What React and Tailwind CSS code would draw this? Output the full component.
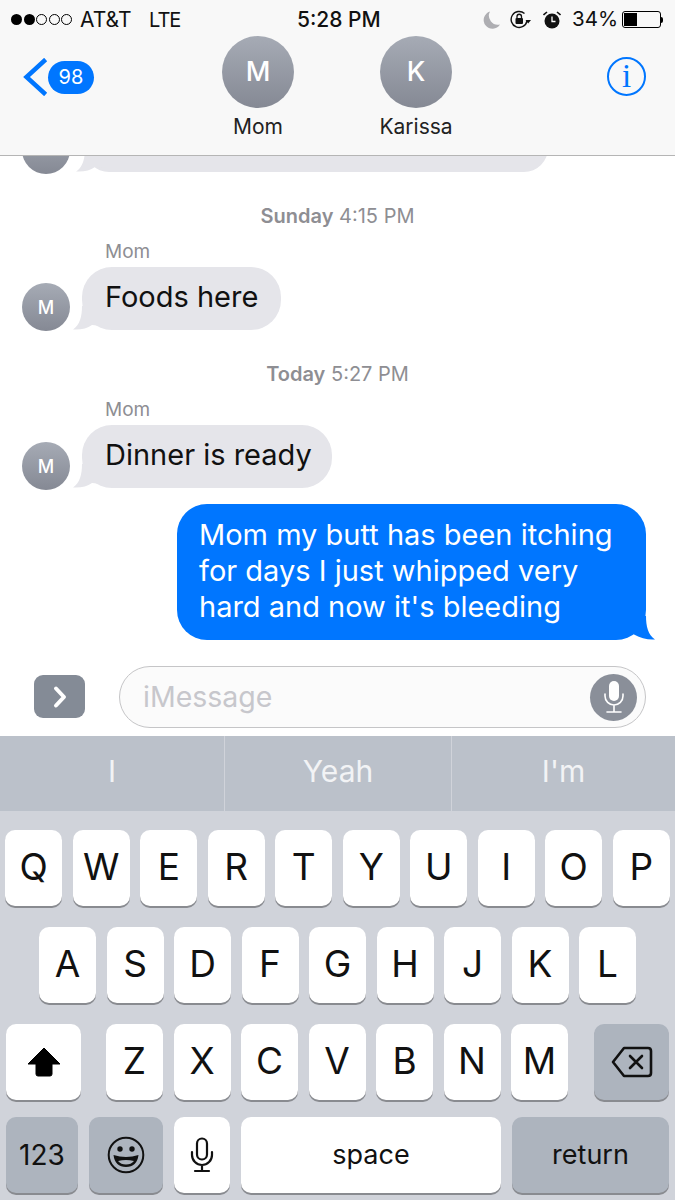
import React from 'react';

const rowOne = ['Q', 'W', 'E', 'R', 'T', 'Y', 'U', 'I', 'O', 'P'];
const rowTwo = ['A', 'S', 'D', 'F', 'G', 'H', 'J', 'K', 'L'];
const rowThree = ['Z', 'X', 'C', 'V', 'B', 'N', 'M'];

function Avatar({ letter }) {
  return (
    <div className="w-[48px] h-[48px] shrink-0 rounded-full bg-gradient-to-b from-[#a6abb5] to-[#858994] flex items-center justify-center text-white text-[18px] font-medium">
      {letter}
    </div>
  );
}

function Contact({ letter, name }) {
  return (
    <div className="w-[100px] flex flex-col items-center">
      <div className="w-[72px] h-[72px] rounded-full bg-gradient-to-b from-[#a6abb5] to-[#858994] flex items-center justify-center text-white text-[27px] font-medium">
        {letter}
      </div>
      <div className="mt-[4px] text-[21px] leading-[30px] text-[#222222]">{name}</div>
    </div>
  );
}

function Timestamp({ day, time, className }) {
  return (
    <div className={`text-center text-[20px] leading-[24px] text-[#8e8e93] ${className}`}>
      <span className="font-semibold">{day}</span> {time}
    </div>
  );
}

function IncomingTail() {
  return (
    <svg className="absolute left-[-9px] bottom-0" width="30" height="24" viewBox="0 0 30 24">
      <path d="M9 0 C9 10 7 19 0 23.5 C8 24 14 22.5 19 19 L30 20 L30 0 Z" fill="#e5e5ea" />
    </svg>
  );
}

function Incoming({ text, width, lift }) {
  return (
    <div className="mt-[3px] ml-[22px] flex items-end">
      <Avatar letter="M" />
      <div
        className={`relative ml-[12px] h-[63px] rounded-[30px] bg-[#e5e5ea] pl-[23px] pb-[4px] flex items-center text-[29px] text-[#111111] ${lift}`}
        style={{ width }}
      >
        <IncomingTail />
        <span className="relative">{text}</span>
      </div>
    </div>
  );
}

function Key({ label, className = 'w-[57px]' }) {
  return (
    <div className={`${className} h-[76px] pb-[2px] rounded-[10px] bg-white shadow-[0_2px_0_#898b90] flex items-center justify-center text-[37px] text-[#111111]`}>
      {label}
    </div>
  );
}

function DarkKey({ children, className }) {
  return (
    <div className={`${className} h-[76px] rounded-[10px] bg-[#adb4be] shadow-[0_2px_0_#898b90] flex items-center justify-center text-[#111111]`}>
      {children}
    </div>
  );
}

function StatusBar() {
  return (
    <div className="h-[38px] pt-[1px] flex items-center text-[21px] text-[#111111] relative">
      <div className="ml-[11px] flex gap-[1.5px]">
        {[0, 1].map((i) => (
          <div key={i} className="w-[11px] h-[11px] rounded-full bg-black" />
        ))}
        {[2, 3, 4].map((i) => (
          <div key={i} className="w-[11px] h-[11px] rounded-full border border-black" />
        ))}
      </div>
      <span className="ml-[8px] w-[51px] whitespace-nowrap">AT&amp;T</span>
      <span className="ml-[18px] w-[31px] text-[20px] tracking-[-1px] whitespace-nowrap">LTE</span>
      <span className="ml-[117px] w-[88px] font-medium whitespace-nowrap">5:28 PM</span>
      <svg className="ml-[97px]" width="18" height="18" viewBox="0 0 18 18">
        <path d="M8 0.5 A8.8 8.8 0 1 0 18 13.5 A9 9 0 0 1 8 0.5 Z" fill="#aeaeb2" />
      </svg>
      <svg className="ml-[10px]" width="22" height="20" viewBox="0 0 22 20" fill="none">
        <path d="M17 11 A8 8 0 1 1 14.5 3.5" stroke="#111" strokeWidth="1.4" />
        <path d="M15.5 10 L21 10 L18.2 13.5 Z" fill="#111" />
        <rect x="5.5" y="8" width="7.5" height="6" rx="1" fill="#111" />
        <path d="M7 8 V6.5 A2.2 2.2 0 0 1 11.5 6.5 V8" stroke="#111" strokeWidth="1.3" />
      </svg>
      <svg className="ml-[11px]" width="18" height="18" viewBox="0 0 18 18">
        <circle cx="9" cy="10" r="7.5" fill="#111" />
        <path d="M9 5.5 V10.5 H12.5" stroke="#fff" strokeWidth="1.3" fill="none" />
        <path d="M0.5 4 L4 1 M17.5 4 L14 1" stroke="#111" strokeWidth="1.6" />
      </svg>
      <span className="ml-[11px] w-[46px] text-[20.5px] whitespace-nowrap">34%</span>
      <div className="ml-[4px] w-[39px] h-[17px] rounded-[3px] border border-black p-[1px]">
        <div className="w-[13px] h-full bg-black" />
      </div>
      <div className="w-[2px] h-[6px] bg-black rounded-r-sm" />
    </div>
  );
}

function NavBar() {
  return (
    <div className="flex items-start pl-[22px] mt-[-2px]">
      <div className="mt-[21px] w-[73px] h-[40px] flex items-center">
        <svg width="27" height="38" viewBox="0 0 27 38" fill="none">
          <path d="M22 3 L4.5 19 L22 35" stroke="#0076ff" strokeWidth="4.5" strokeLinecap="square" />
        </svg>
        <div className="ml-[-1px] w-[46px] h-[33px] rounded-full bg-[#0076ff] text-white text-[20px] flex items-center justify-center shrink-0">
          98
        </div>
      </div>
      <div className="ml-[113px]">
        <Contact letter="M" name="Mom" />
      </div>
      <div className="ml-[58px]">
        <Contact letter="K" name="Karissa" />
      </div>
      <div className="ml-[141px] mt-[21px] w-[39px] h-[39px] rounded-full border-[2px] border-[#0076ff] flex items-center justify-center text-[#0076ff] text-[33px] font-['Liberation_Serif',serif] leading-none">
        i
      </div>
    </div>
  );
}

function Messages() {
  return (
    <div className="h-[510px] overflow-hidden relative bg-white">
      {/* Bubble scrolled under the header */}
      <div className="mt-[-32px] ml-[22px] flex items-end">
        <Avatar />
        <div className="relative ml-[15px] mb-[2px] w-[463px] h-[48px] rounded-[30px] bg-[#e5e5ea]">
          <IncomingTail />
        </div>
      </div>
      <Timestamp day="Sunday" time="4:15 PM" className="mt-[30px]" />
      <div className="mt-[12px] ml-[105px] text-[19px] leading-[24px] text-[#8e8e93]">Mom</div>
      <Incoming text="Foods here" width="199px" lift="mb-[1px]" />
      <Timestamp day="Today" time="5:27 PM" className="mt-[31px]" />
      <div className="mt-[12px] ml-[105px] text-[19px] leading-[24px] text-[#8e8e93]">Mom</div>
      <Incoming text="Dinner is ready" width="250px" lift="mb-[2px]" />
      <div className="mt-[14px] flex justify-end pr-[29px]">
        <div className="relative w-[469px] h-[136px] rounded-[30px] bg-[#0076ff] pl-[22px] pt-[13px] text-[29px] leading-[36px] text-white">
          <svg className="absolute right-[-9px] bottom-0" width="30" height="24" viewBox="0 0 30 24">
            <path d="M21 0 C21 10 23 19 30 23.5 C23 24 16 22.5 8 18 L0 20 L0 0 Z" fill="#0076ff" />
          </svg>
          <p className="relative whitespace-nowrap">Mom my butt has been itching</p>
          <p className="relative whitespace-nowrap">for days I just whipped very</p>
          <p className="relative whitespace-nowrap">hard and now it&apos;s bleeding</p>
        </div>
      </div>
    </div>
  );
}

function InputBar() {
  return (
    <div className="h-[70px] bg-white flex items-start pl-[34px]">
      <div className="mt-[9px] w-[51px] h-[43px] rounded-[9px] bg-[#848b96] flex items-center justify-center">
        <svg width="16" height="24" viewBox="0 0 16 24" fill="none">
          <path d="M4 3.5 L12 12 L4 20.5" stroke="#fff" strokeWidth="4" strokeLinecap="round" strokeLinejoin="round" />
        </svg>
      </div>
      <div className="ml-[34px] w-[527px] h-[62px] rounded-[31px] border-[1.5px] border-[#c5c5c7] bg-[#fbfbfb] flex items-center justify-between pl-[23px] pr-[8px]">
        <span className="text-[28.5px] text-[#c7c7cc]">iMessage</span>
        <div className="w-[47px] h-[47px] rounded-full bg-[#8a8f99] flex items-center justify-center">
          <svg width="22" height="34" viewBox="0 0 22 34" fill="none">
            <rect x="6" y="1" width="10" height="20" rx="5" fill="#fff" />
            <path d="M2 14 V16 A9 9 0 0 0 20 16 V14 M11 25 V32 M4 32 H18" stroke="#fff" strokeWidth="1.6" strokeLinecap="round" />
          </svg>
        </div>
      </div>
    </div>
  );
}

function Suggestions() {
  return (
    <div className="h-[75px] bg-[#bbc1ca] flex text-[30px] text-[#f2f3f5] pb-[4px]">
      <div className="w-[224px] flex items-center justify-center">I</div>
      <div className="w-[227px] mb-[-4px] pb-[4px] flex items-center justify-center border-l border-[#d0d3da]">Yeah</div>
      <div className="flex-1 mb-[-4px] pb-[4px] flex items-center justify-center border-l border-[#d0d3da]">I&apos;m</div>
    </div>
  );
}

function Keyboard() {
  return (
    <div className="h-[389px] bg-[#d0d3da] pt-[19px] flex flex-col gap-[21px]">
      <div className="flex justify-center gap-[10.5px]">
        {rowOne.map((k) => (
          <Key key={k} label={k} />
        ))}
      </div>
      <div className="flex justify-center gap-[10.5px]">
        {rowTwo.map((k) => (
          <Key key={k} label={k} />
        ))}
      </div>
      <div className="flex pl-[6px]">
        <div className="w-[75px] h-[76px] rounded-[10px] bg-white shadow-[0_2px_0_#898b90] flex items-center justify-center">
          <svg width="34" height="30" viewBox="0 0 34 30">
            <path d="M17 1 L33 17 H25 V27 Q25 29 23 29 H11 Q9 29 9 27 V17 H1 Z" fill="#000" stroke="#000" strokeLinejoin="round" />
          </svg>
        </div>
        <div className="ml-[25px] flex gap-[10.5px]">
          {rowThree.map((k) => (
            <Key key={k} label={k} />
          ))}
        </div>
        <DarkKey className="ml-[26px] w-[75px]">
          <svg width="42" height="32" viewBox="0 0 42 32" fill="none" stroke="#111" strokeWidth="2.6" strokeLinejoin="round" strokeLinecap="round">
            <path d="M13 2 H37 Q40 2 40 5 V27 Q40 30 37 30 H13 L2 16 Z" />
            <path d="M19 10 L31 22 M31 10 L19 22" />
          </svg>
        </DarkKey>
      </div>
      <div className="flex pl-[6px] gap-[11px] mt-[-4px]">
        <DarkKey className="w-[72px] text-[28px]">123</DarkKey>
        <DarkKey className="w-[74px]">
          <svg width="38" height="38" viewBox="0 0 38 38" fill="none">
            <circle cx="19" cy="19" r="17.3" stroke="#111" strokeWidth="2" />
            <circle cx="13" cy="13" r="2.7" fill="#111" />
            <circle cx="25" cy="13" r="2.7" fill="#111" />
            <path d="M6.5 19 Q19 23 31.5 19 Q30 31 19 31 Q8 31 6.5 19 Z" fill="#111" />
            <path d="M11 25 Q19 23 27 25 Q24 28.5 19 28.5 Q14 28.5 11 25 Z" fill="#adb4be" />
          </svg>
        </DarkKey>
        <div className="w-[56px] h-[76px] rounded-[10px] bg-white shadow-[0_2px_0_#898b90] flex items-center justify-center">
          <svg width="24" height="36" viewBox="0 0 24 36" fill="none" stroke="#111" strokeWidth="2.2" strokeLinecap="round">
            <rect x="7" y="1.5" width="10" height="21" rx="5" />
            <path d="M2 15 V18 A10 10 0 0 0 22 18 V15 M12 28 V34 M5 34 H19" />
          </svg>
        </div>
        <div className="w-[260px] h-[76px] rounded-[10px] bg-white shadow-[0_2px_0_#898b90] flex items-center justify-center text-[27px] text-[#111111]">
          space
        </div>
        <DarkKey className="w-[157px] text-[27px]">return</DarkKey>
      </div>
    </div>
  );
}

export default function App() {
  return (
    <div className="w-[675px] h-[1200px] overflow-hidden bg-white font-['Inter','Liberation_Sans',sans-serif] relative">
      <div className="h-[156px] bg-[#f8f8f8] border-b border-[#b5b5b5] relative z-10">
        <StatusBar />
        <NavBar />
      </div>
      <Messages />
      <InputBar />
      <Suggestions />
      <Keyboard />
    </div>
  );
}
